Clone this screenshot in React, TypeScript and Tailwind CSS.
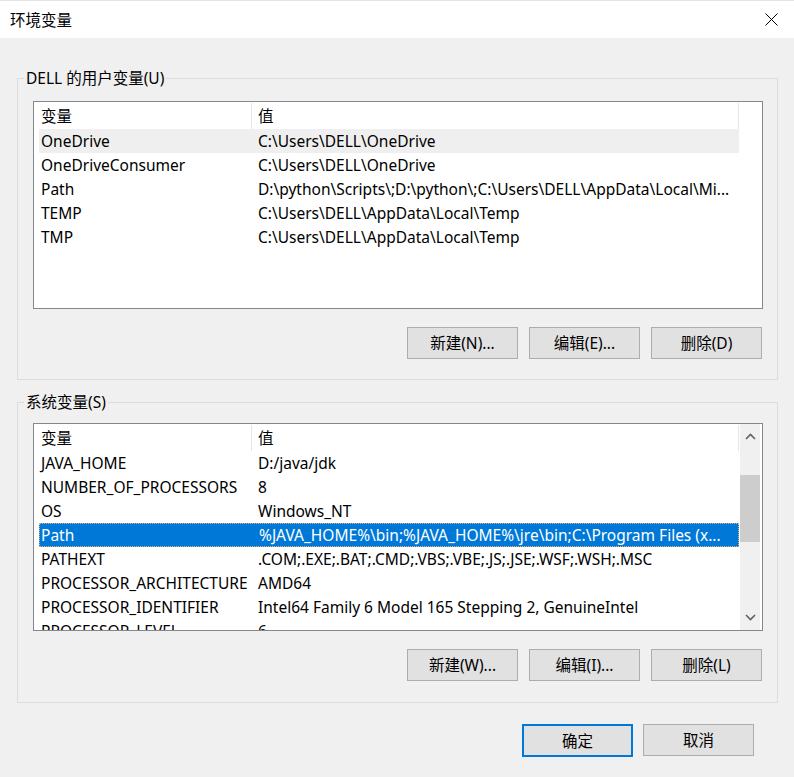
import React from "react";

type Row = { name: string; value: string; hover?: boolean; selected?: boolean };

const userVars: Row[] = [
  { name: "OneDrive", value: "C:\\Users\\DELL\\OneDrive", hover: true },
  { name: "OneDriveConsumer", value: "C:\\Users\\DELL\\OneDrive" },
  { name: "Path", value: "D:\\python\\Scripts\\;D:\\python\\;C:\\Users\\DELL\\AppData\\Local\\Mi..." },
  { name: "TEMP", value: "C:\\Users\\DELL\\AppData\\Local\\Temp" },
  { name: "TMP", value: "C:\\Users\\DELL\\AppData\\Local\\Temp" },
];

const sysVars: Row[] = [
  { name: "JAVA_HOME", value: "D:/java/jdk" },
  { name: "NUMBER_OF_PROCESSORS", value: "8" },
  { name: "OS", value: "Windows_NT" },
  { name: "Path", value: "%JAVA_HOME%\\bin;%JAVA_HOME%\\jre\\bin;C:\\Program Files (x...", selected: true },
  { name: "PATHEXT", value: ".COM;.EXE;.BAT;.CMD;.VBS;.VBE;.JS;.JSE;.WSF;.WSH;.MSC" },
  { name: "PROCESSOR_ARCHITECTURE", value: "AMD64" },
  { name: "PROCESSOR_IDENTIFIER", value: "Intel64 Family 6 Model 165 Stepping 2, GenuineIntel" },
  { name: "PROCESSOR_LEVEL", value: "6" },
];

function Chevron({ up }: { up?: boolean }) {
  return (
    <svg width="11" height="7" viewBox="0 0 11 7">
      <path d={up ? "M1 6 L5.5 1.5 L10 6" : "M1 1 L5.5 5.5 L10 1"} fill="none" stroke="#606060" strokeWidth="1.6" />
    </svg>
  );
}

function VarList({ rows, scroll }: { rows: Row[]; scroll?: boolean }) {
  return (
    <div className="flex h-[208px] w-[730px] overflow-hidden border border-[#828790] bg-white">
      <div className="w-[705px] pl-[5px]">
        <div className="flex h-[27px] items-center">
          <div className="w-[212px] pl-[2px]">变量</div>
          <div className="mt-[1px] h-[26px] w-px bg-[#e5e5e5]" />
          <div className="w-[486px] pl-[6px]">值</div>
          <div className="mt-[1px] h-[26px] w-px bg-[#e5e5e5]" />
        </div>
        {rows.map((r) => (
          <div
            key={r.name}
            className={`flex h-[24px] w-[700px] items-center whitespace-nowrap ${
              r.selected ? "border border-dotted border-[#f0b070] bg-[#0078d7] text-white" : r.hover ? "bg-[#efefef]" : ""
            }`}
          >
            <div className={`w-[212px] ${r.selected ? "pl-[1px]" : "pl-[2px]"}`}>{r.name}</div>
            <div className="w-[486px] overflow-hidden pl-[7px]">{r.value}</div>
          </div>
        ))}
      </div>
      {scroll && (
        <div className="ml-[1px] flex w-[20px] flex-col bg-[#f0f0f0]">
          <div className="flex h-[25px] items-center justify-center">
            <Chevron up />
          </div>
          <div className="flex-1">
            <div className="mt-[26px] h-[67px] bg-[#cdcdcd]" />
          </div>
          <div className="flex h-[25px] items-center justify-center">
            <Chevron />
          </div>
        </div>
      )}
    </div>
  );
}

function Btn({ label, primary }: { label: string; primary?: boolean }) {
  return (
    <div
      className={`flex h-[32px] w-[111px] items-center justify-center bg-[#e1e1e1] ${
        primary ? "h-[33px] border-2 border-[#0078d7]" : "border border-[#adadad]"
      }`}
    >
      {label}
    </div>
  );
}

function Group({ title, children, top, pt, pb }: { title: string; children: React.ReactNode; top: string; pt: string; pb: string }) {
  return (
    <div className={`relative ml-[17px] mr-[16px] border border-[#dcdcdc] pl-[15px] pr-[14px] ${top} ${pt} ${pb}`}>
      <div className="absolute -top-[11px] left-[6px] bg-[#f0f0f0] px-[2px] leading-[20px]">{title}</div>
      {children}
    </div>
  );
}

export default function App() {
  return (
    <div
      className="h-[777px] w-[794px] overflow-hidden bg-[#f0f0f0] text-[15.5px] leading-[20px] text-black"
      style={{ fontFamily: '"Noto Sans", "Noto Sans CJK SC", sans-serif' }}
    >
      <div className="flex h-[38px] items-center justify-between border-t border-[#e3e3e3] bg-white pl-[10px] pr-[16px]">
        <span>环境变量</span>
        <svg width="13" height="13" viewBox="0 0 13 13">
          <path d="M0.5 0.5 L12.5 12.5 M12.5 0.5 L0.5 12.5" stroke="#000" strokeWidth="1" />
        </svg>
      </div>

      <Group title="DELL 的用户变量(U)" top="mt-[40px]" pt="pt-[22px]" pb="pb-[20px]">
        <VarList rows={userVars} />
        <div className="mr-[1px] mt-[18px] flex justify-end gap-[11px]">
          <Btn label="新建(N)..." />
          <Btn label="编辑(E)..." />
          <Btn label="删除(D)" />
        </div>
      </Group>

      <Group title="系统变量(S)" top="mt-[22px]" pt="pt-[20px]" pb="pb-[21px]">
        <VarList rows={sysVars} scroll />
        <div className="mr-[1px] mt-[18px] flex justify-end gap-[11px]">
          <Btn label="新建(W)..." />
          <Btn label="编辑(I)..." />
          <Btn label="删除(L)" />
        </div>
      </Group>

      <div className="mt-[21px] flex items-start justify-end gap-[10px] pr-[40px]">
        <Btn label="确定" primary />
        <Btn label="取消" />
      </div>
    </div>
  );
}
